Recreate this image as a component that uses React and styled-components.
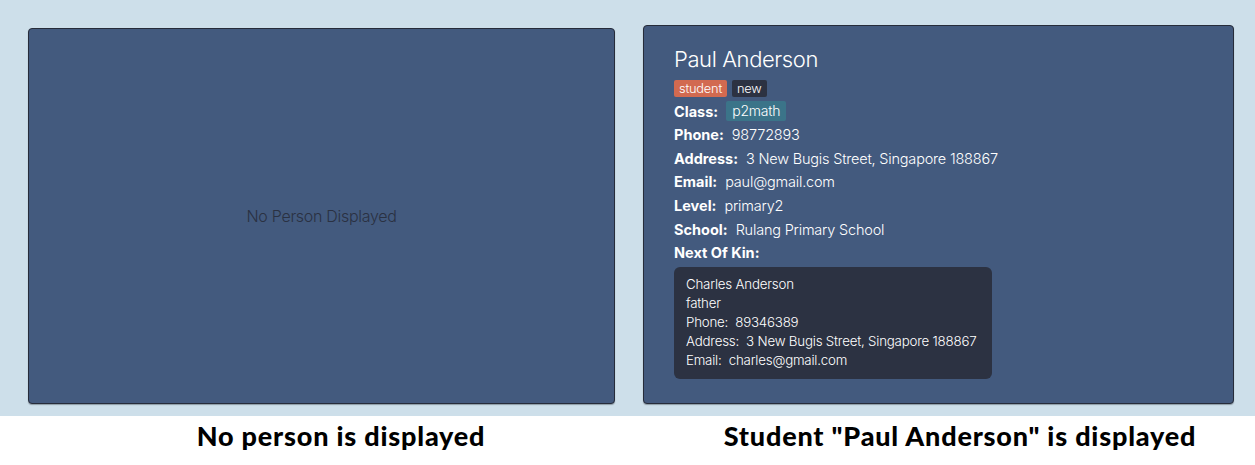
import React from 'react';
import styled, { createGlobalStyle } from 'styled-components';

const GlobalStyle = createGlobalStyle`
  body {
    margin: 0;
    background: #ffffff;
    font-family: Inter, "Liberation Sans", sans-serif;
  }
`;

const Stage = styled.div`
  width: 1255px;
  height: 465px;
  display: flex;
  flex-direction: column;
`;

const Backdrop = styled.div`
  height: 416px;
  background: #cddfea;
  display: flex;
  align-items: flex-end;
  gap: 28px;
  padding: 0 21px 12px 28px;
  box-sizing: border-box;
`;

const Panel = styled.div`
  width: ${(p) => p.$w}px;
  height: ${(p) => p.$h}px;
  box-sizing: border-box;
  background: #435a7e;
  border: 1px solid #262c3a;
  border-radius: 4px;
  box-shadow: 0 1px 1px rgba(20, 25, 35, 0.35);
`;

const EmptyPanel = styled(Panel)`
  display: flex;
  align-items: center;
  justify-content: center;
`;

const EmptyText = styled.span`
  color: #2a3142;
  font-size: 16px;
  font-weight: 300;
  letter-spacing: -0.3px;
`;

const DetailPanel = styled(Panel)`
  padding: 18px 30px;
  color: #ffffff;
`;

const Name = styled.div`
  font-size: 22px;
  font-weight: 300;
  line-height: 30px;
  letter-spacing: -0.4px;
`;

const TagRow = styled.div`
  display: flex;
  gap: 5px;
  margin-top: 6px;
`;

const Tag = styled.span`
  background: ${(p) => p.$bg};
  color: #ffffff;
  font-size: ${(p) => (p.$large ? 14 : 12.8)}px;
  font-weight: 300;
  line-height: ${(p) => (p.$large ? 20 : 17)}px;
  padding: 0 ${(p) => (p.$large ? 6 : 5)}px;
  border-radius: 2px;
  letter-spacing: -0.2px;
`;

const Row = styled.div`
  display: flex;
  align-items: center;
  height: ${(p) => p.$h || 23.6}px;
  margin-top: ${(p) => p.$mt || 0}px;
  font-size: 14.5px;
  gap: 8px;
`;

const Label = styled.span`
  font-weight: 700;
`;

const Value = styled.span`
  font-weight: 300;
  letter-spacing: -0.2px;
`;

const KinBox = styled.div`
  margin-top: 2px;
  width: 318px;
  box-sizing: border-box;
  background: #2c3242;
  border-radius: 6px;
  padding: 8px 12px;
  font-size: 13.3px;
  font-weight: 300;
  line-height: 19.2px;
  letter-spacing: -0.2px;
`;

const KinLine = styled.div`
  white-space: pre;
`;

const Captions = styled.div`
  flex: 1;
  display: flex;
  align-items: flex-start;
  padding-top: 4px;
`;

const Caption = styled.div`
  width: ${(p) => p.$w}px;
  text-align: center;
  font-family: Lato, "Open Sans", sans-serif;
  font-weight: 900;
  font-size: 27px;
  line-height: 32px;
  letter-spacing: 0.8px;
  color: #000000;
`;

const details = [
  ['Phone:', '98772893'],
  ['Address:', '3 New Bugis Street, Singapore 188867'],
  ['Email:', 'paul@gmail.com'],
  ['Level:', 'primary2'],
  ['School:', 'Rulang Primary School'],
];

const kin = [
  'Charles Anderson',
  'father',
  'Phone:  89346389',
  'Address:  3 New Bugis Street, Singapore 188867',
  'Email:  charles@gmail.com',
];

export default function App() {
  return (
    <Stage>
      <GlobalStyle />
      <Backdrop>
        <EmptyPanel $w={587} $h={376}>
          <EmptyText>No Person Displayed</EmptyText>
        </EmptyPanel>
        <DetailPanel $w={591} $h={379}>
          <Name>Paul Anderson</Name>
          <TagRow>
            <Tag $bg="#d26a50">student</Tag>
            <Tag $bg="#2c3242">new</Tag>
          </TagRow>
          <Row $h={24} $mt={2}>
            <Label>Class:</Label>
            <Tag $bg="#3b7489" $large>p2math</Tag>
          </Row>
          {details.map(([label, value]) => (
            <Row key={label}>
              <Label>{label}</Label>
              <Value>{value}</Value>
            </Row>
          ))}
          <Row>
            <Label>Next Of Kin:</Label>
          </Row>
          <KinBox>
            {kin.map((line) => (
              <KinLine key={line}>{line}</KinLine>
            ))}
          </KinBox>
        </DetailPanel>
      </Backdrop>
      <Captions>
        <Caption $w={682}>No person is displayed</Caption>
        <Caption $w={556}>Student "Paul Anderson" is displayed</Caption>
      </Captions>
    </Stage>
  );
}
